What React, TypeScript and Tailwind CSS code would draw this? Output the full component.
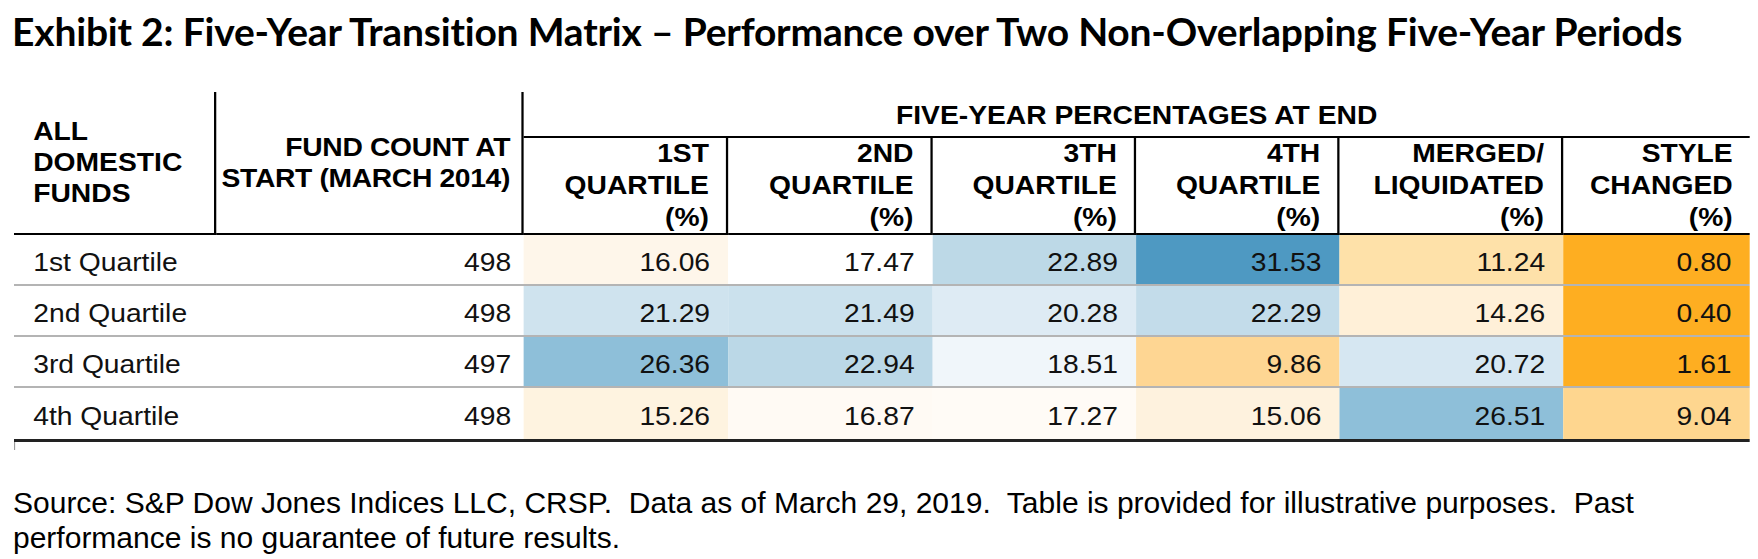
const subHeaders = [
  ['1ST', 'QUARTILE', '(%)'],
  ['2ND', 'QUARTILE', '(%)'],
  ['3TH', 'QUARTILE', '(%)'],
  ['4TH', 'QUARTILE', '(%)'],
  ['MERGED/', 'LIQUIDATED', '(%)'],
  ['STYLE', 'CHANGED', '(%)'],
]

const rows = [
  {
    label: '1st Quartile',
    count: '498',
    cells: [
      ['16.06', 'bg-[#fef6ea]'],
      ['17.47', 'bg-white'],
      ['22.89', 'bg-[#bdd9e7]'],
      ['31.53', 'bg-[#4e99c2]'],
      ['11.24', 'bg-[#fee1a9]'],
      ['0.80', 'bg-[#feae21]'],
    ],
  },
  {
    label: '2nd Quartile',
    count: '498',
    cells: [
      ['21.29', 'bg-[#cfe3ee]'],
      ['21.49', 'bg-[#cbe1ed]'],
      ['20.28', 'bg-[#deebf4]'],
      ['22.29', 'bg-[#c3dcea]'],
      ['14.26', 'bg-[#fff0d8]'],
      ['0.40', 'bg-[#feae21]'],
    ],
  },
  {
    label: '3rd Quartile',
    count: '497',
    cells: [
      ['26.36', 'bg-[#8ebfd9]'],
      ['22.94', 'bg-[#bbd8e7]'],
      ['18.51', 'bg-[#f0f6fa]'],
      ['9.86', 'bg-[#fed693]'],
      ['20.72', 'bg-[#d6e7f2]'],
      ['1.61', 'bg-[#feae21]'],
    ],
  },
  {
    label: '4th Quartile',
    count: '498',
    cells: [
      ['15.26', 'bg-[#fef3e0]'],
      ['16.87', 'bg-[#fffaf4]'],
      ['17.27', 'bg-[#fffbf6]'],
      ['15.06', 'bg-[#fef2de]'],
      ['26.51', 'bg-[#8ebfd9]'],
      ['9.04', 'bg-[#fed68f]'],
    ],
  },
]

export default function App() {
  return (
    <div className="w-[1758px] h-[559px] bg-white text-black overflow-hidden">
      <h1 className="pl-[12px] pt-[8px] text-[39px] leading-[47px] font-bold font-['Lato',sans-serif] tracking-[-0.2px]">
        Exhibit 2: Five-Year Transition Matrix – Performance over Two Non-Overlapping Five-Year Periods
      </h1>

      {/* the source table is a horizontally stretched Excel grab */}
      <div className="mt-[37px] ml-[14px] w-[1536px] origin-left scale-x-[1.13] font-['Liberation_Sans',Arial,sans-serif]">
        <div className="grid grid-cols-[179px_272px_181px_181px_180px_180px_198px_165px] grid-rows-[46px_97px]">
          <div className="row-span-2 flex flex-col justify-center pl-[17px] border-r-2 border-b-2 border-black text-[25px] leading-[31px] font-bold">
            <span>ALL</span>
            <span>DOMESTIC</span>
            <span>FUNDS</span>
          </div>
          <div className="row-span-2 flex flex-col justify-center items-end pr-[10px] border-r-2 border-b-2 border-black text-[25px] leading-[31px] font-bold whitespace-nowrap tracking-[-0.3px]">
            <span>FUND COUNT AT</span>
            <span>START (MARCH 2014)</span>
          </div>
          <div className="col-span-6 flex items-center justify-center pt-[4px] border-b-2 border-black text-[25px] font-bold">
            FIVE-YEAR PERCENTAGES AT END
          </div>
          {subHeaders.map((lines, i) => (
            <div
              key={i}
              className={`flex flex-col justify-end items-end pr-[15px] border-b-2 border-black text-[25px] leading-[32px] font-bold ${
                i < subHeaders.length - 1 ? 'border-r-2' : ''
              }`}
            >
              {lines.map((l) => (
                <span key={l}>{l}</span>
              ))}
            </div>
          ))}
        </div>

        {rows.map((row, r) => (
          <div
            key={row.label}
            className={`grid grid-cols-[179px_272px_181px_181px_180px_180px_198px_165px] text-[25px] text-[#111] ${
              r === rows.length - 1 ? 'h-[54px] border-b-[3px] border-[#222]' : 'h-[51px] border-b-2 border-[#b4b4b4]'
            }`}
          >
            <div className="flex items-center pt-[7px] pl-[17px]">{row.label}</div>
            <div className="flex items-center justify-end pt-[7px] pr-[11px]">{row.count}</div>
            {row.cells.map(([v, bg]) => (
              <div key={v} className={`flex items-center justify-end pt-[7px] pr-[16px] ${bg}`}>
                {v}
              </div>
            ))}
          </div>
        ))}
        <div className="h-[8px] w-px bg-[#9a9a9a]" />
      </div>

      <p className="mt-[35px] pl-[13px] text-[30px] leading-[35px] font-['Liberation_Sans',Arial,sans-serif] whitespace-pre-wrap">
        Source: S&amp;P Dow Jones Indices LLC, CRSP.  Data as of March 29, 2019.  Table is provided for illustrative purposes.  Past
        <br />
        performance is no guarantee of future results.
      </p>
    </div>
  )
}
